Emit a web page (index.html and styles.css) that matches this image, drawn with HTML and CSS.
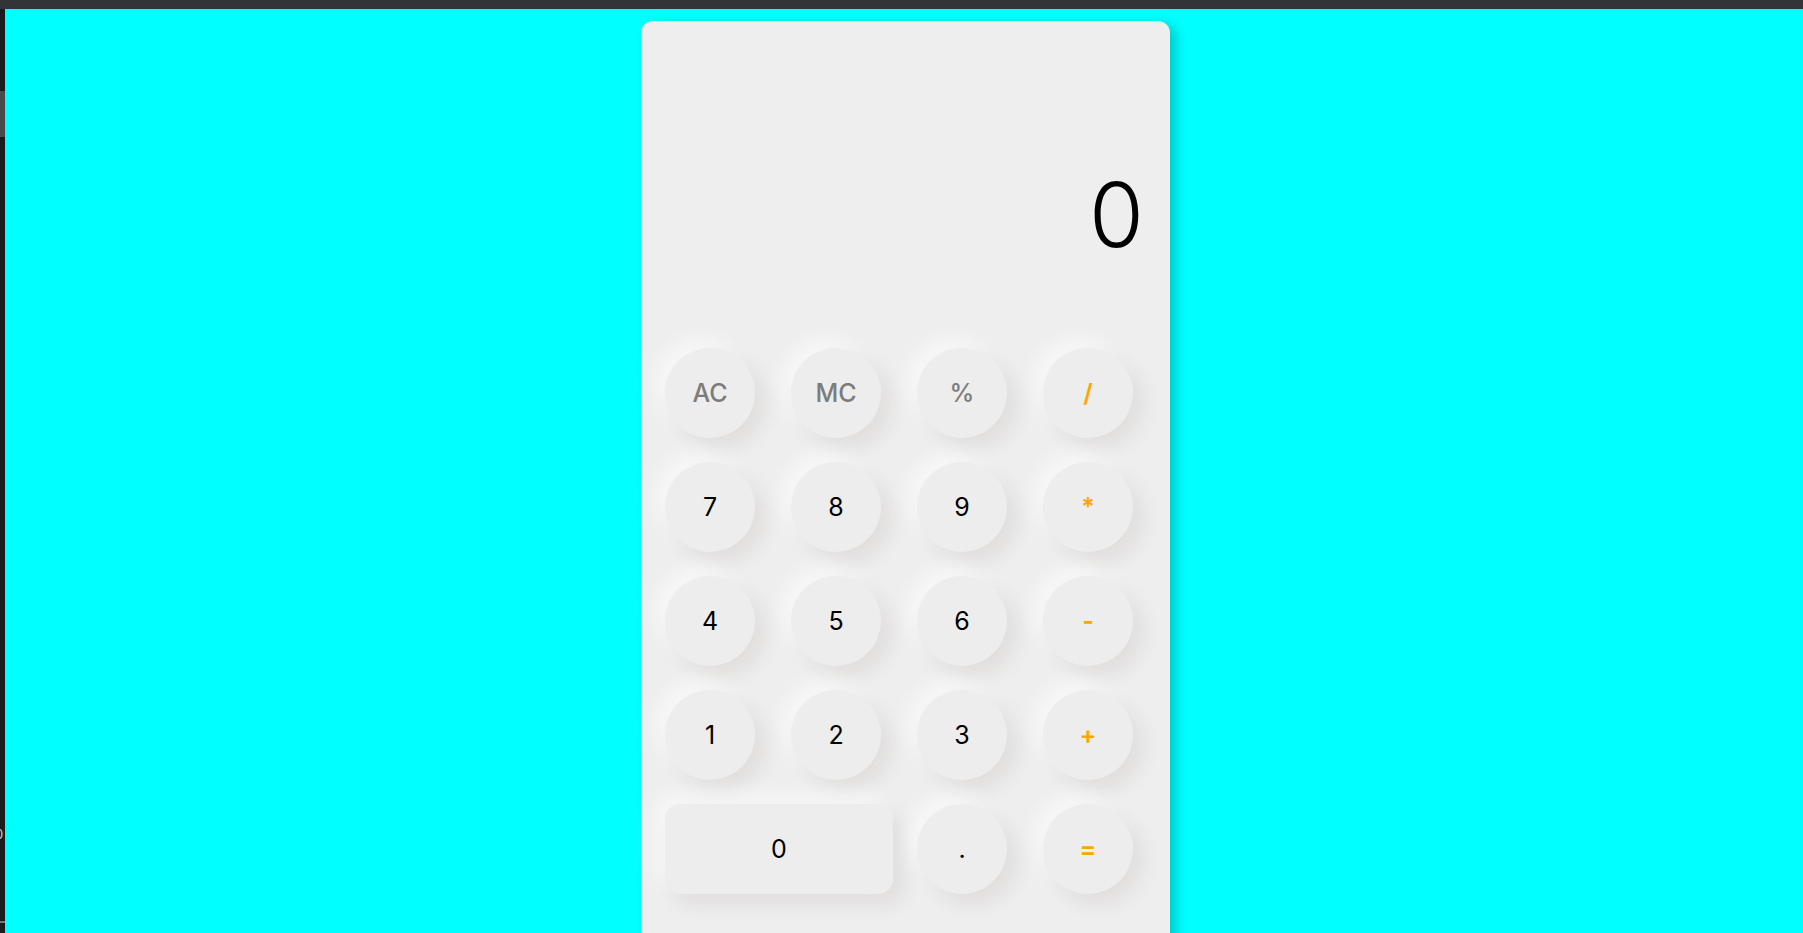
FILE: index.html
```html
<!DOCTYPE html>
<html lang="en">
<head>
<meta charset="utf-8">
<title>Calculator</title>
<link rel="stylesheet" href="styles.css">
</head>
<body>
<div class="topbar"></div>
<div class="main">
  <div class="sidebar">
    <div class="side-thumb"></div>
    <span class="side-char">0</span>
    <div class="side-line"></div>
  </div>
  <div class="stage">
    <div class="calc">
      <div class="display">0</div>
      <div class="keys">
        <button class="key fn">AC</button>
        <button class="key fn">MC</button>
        <button class="key fn">%</button>
        <button class="key op">/</button>
        <button class="key num">7</button>
        <button class="key num">8</button>
        <button class="key num">9</button>
        <button class="key op">*</button>
        <button class="key num">4</button>
        <button class="key num">5</button>
        <button class="key num">6</button>
        <button class="key op">-</button>
        <button class="key num">1</button>
        <button class="key num">2</button>
        <button class="key num">3</button>
        <button class="key op">+</button>
        <button class="key num wide">0</button>
        <button class="key num">.</button>
        <button class="key op">=</button>
      </div>
    </div>
  </div>
</div>
</body>
</html>
```
FILE: styles.css
```css
html, body {
  margin: 0;
  padding: 0;
  height: 100%;
  overflow: hidden;
}
body {
  background: #00ffff;
  font-family: "Inter", "Noto Sans", sans-serif;
  display: flex;
  flex-direction: column;
}
.topbar {
  height: 9px;
  background: #333438;
  flex: none;
}
.main {
  flex: 1;
  display: flex;
  min-height: 0;
}
.sidebar {
  width: 5px;
  background: #1c1c1c;
  flex: none;
  display: flex;
  flex-direction: column;
  overflow: hidden;
}
.side-thumb {
  margin-top: 82px;
  height: 46px;
  background: #4a4a4a;
}
.side-char {
  margin-top: 690px;
  margin-left: -5px;
  color: #cfcfcf;
  font-size: 13px;
  line-height: 14px;
}
.side-line {
  margin-top: 80px;
  height: 2px;
  background: #777;
}
.stage {
  flex: 1;
  display: flex;
  justify-content: center;
  align-items: flex-start;
  padding-top: 12px;
  padding-left: 3px;
  min-width: 0;
}
.calc {
  width: 529px;
  height: 1000px;
  flex: none;
  background: #eeeeee;
  border-radius: 12px;
  box-shadow: 6px 4px 12px rgba(0, 0, 0, 0.22);
}
.display {
  height: 154px;
  padding: 149px 26px 0 0;
  text-align: right;
  font-family: "Inter", "Noto Sans", sans-serif;
  font-size: 89px;
  font-weight: 300;
  line-height: 1;
  color: #000;
}
.keys {
  display: grid;
  grid-template-columns: repeat(4, 90px);
  grid-auto-rows: 90px;
  column-gap: 36px;
  row-gap: 24px;
  padding: 24px 36px 0 24px;
}
.key {
  width: 90px;
  height: 90px;
  border: none;
  border-radius: 50%;
  background: #ededed;
  font-family: "Inter", "Noto Sans", sans-serif;
  font-size: 25px;
  padding: 0;
  box-shadow: 10px 10px 20px rgba(60, 40, 20, 0.08), -10px -10px 20px rgba(255, 255, 255, 0.55);
  display: flex;
  align-items: center;
  justify-content: center;
  line-height: 1;
}
.num {
  color: #000;
  font-weight: 400;
}
.fn {
  color: #7c7c7c;
  font-weight: 500;
}
.op {
  color: #ffa500;
  font-weight: 600;
}
.wide {
  grid-column: span 2;
  width: 228px;
  border-radius: 15px;
}
```
